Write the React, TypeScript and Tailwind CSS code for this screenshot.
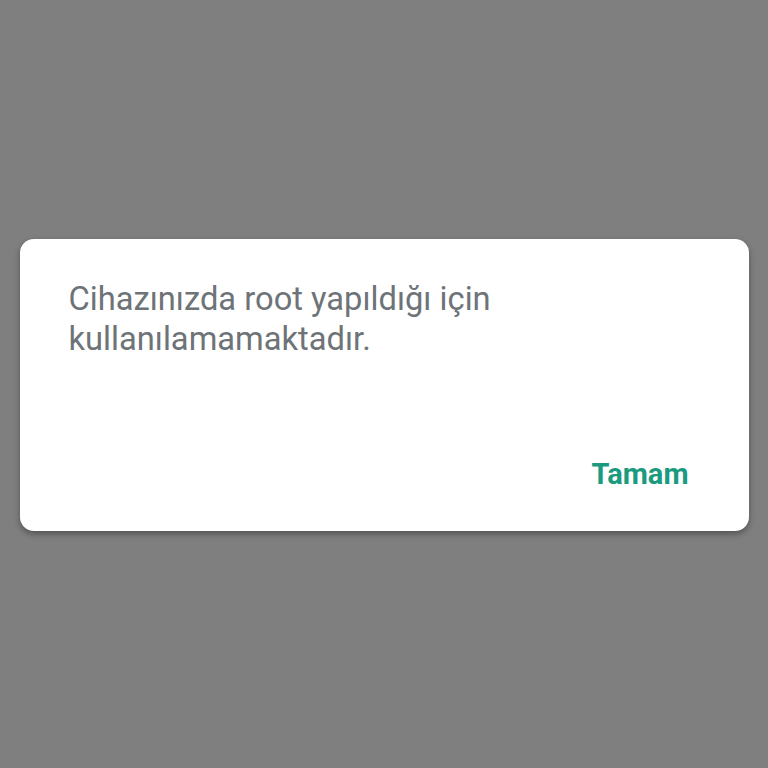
export default function App() {
  return (
    <div className="w-[768px] h-[768px] bg-[#7f7f7f] flex items-center justify-center" style={{ fontFamily: "Roboto, 'Noto Sans', sans-serif" }}>
      <div className="w-[729px] h-[292px] bg-white rounded-[14px] shadow-[0_3px_6px_rgba(0,0,0,0.35)] flex flex-col justify-between pl-[49px] pr-[60px] pt-[40px] pb-[42px] translate-y-[1px]">
        <p className="text-[32.7px] leading-[40px] text-[#6d7377] max-w-[580px]">
          Cihazınızda root yapıldığı için
          <br />
          kullanılamamaktadır.
        </p>
        <div className="flex justify-end">
          <button className="text-[29px] font-bold text-[#1a9a7e] leading-[30px]">Tamam</button>
        </div>
      </div>
    </div>
  );
}
